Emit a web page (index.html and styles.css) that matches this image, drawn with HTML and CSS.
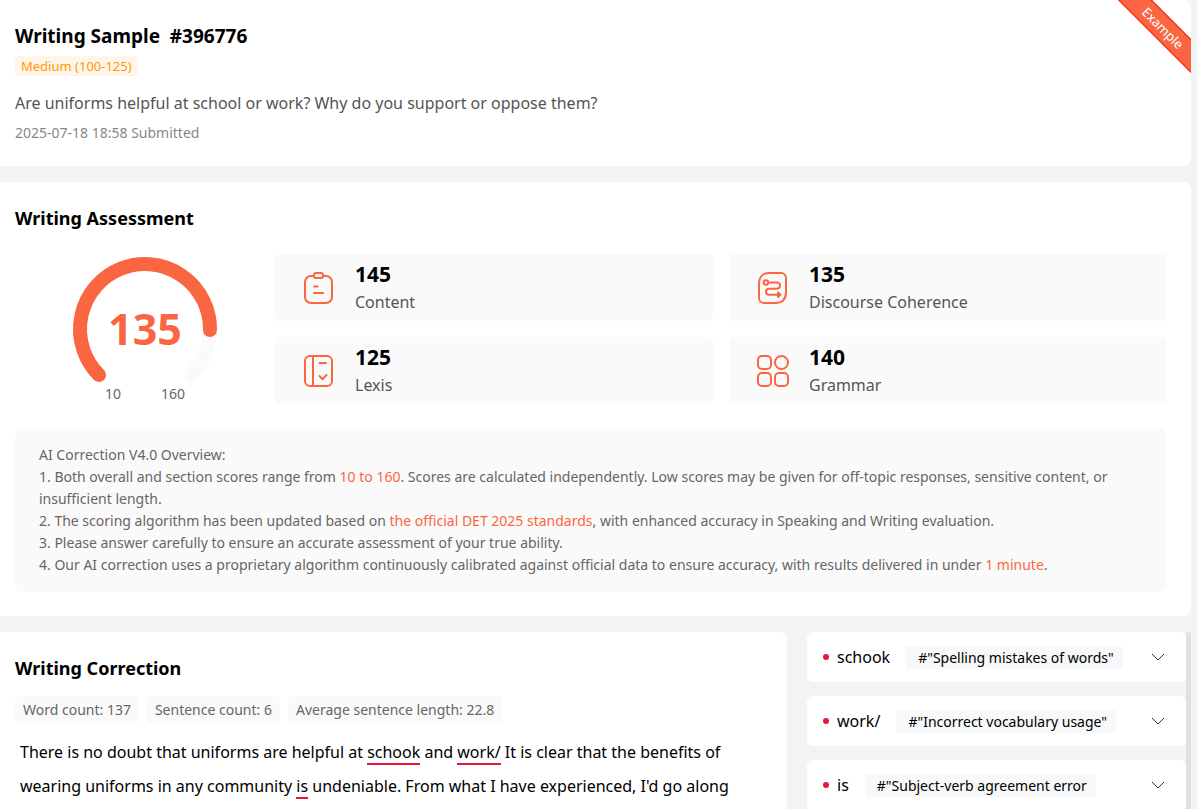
FILE: index.html
```html
<!DOCTYPE html>
<html lang="en">
<head>
    <meta charset="UTF-8">
    <meta name="viewport" content="width=device-width, initial-scale=1.0">
    <title>Writing Sample #396776</title>
    <link rel="stylesheet" href="styles.css">
</head>
<body>

    <header class="card sample">
        <h1>Writing Sample&nbsp; #396776</h1>
        <span class="level">Medium (100-125)</span>
        <p class="question">Are uniforms helpful at school or work? Why do you support or oppose them?</p>
        <p class="submitted">2025-07-18 18:58 Submitted</p>
        <div class="ribbon">Example</div>
    </header>

    <section class="card assessment">
        <h2>Writing Assessment</h2>
        <div class="results">
            <div class="gauge">
                <svg viewBox="0 0 150 150" width="150" height="150" fill="none" stroke-width="14" stroke-linecap="round">
                    <path d="M29 121A65 65 0 1 1 121 121" stroke="#fafafa"/>
                    <path d="M29 121A65 65 0 1 1 140 76" stroke="#fa6641"/>
                </svg>
                <strong class="total">135</strong>
                <div class="range"><span>10</span><span>160</span></div>
            </div>
            <div class="scores">
                <div class="score">
                    <svg class="icon" viewBox="0 0 32 32">
                        <path d="M11 4H8a6 6 0 0 0-6 6v15a6 6 0 0 0 6 6h15a6 6 0 0 0 6-6V10a6 6 0 0 0-6-6h-3"/>
                        <rect x="11" y="1" width="9" height="5" rx="2"/>
                        <path d="M11 14.500h3.500M11 21h9"/>
                    </svg>
                    <div>
                        <strong>145</strong>
                        <span>Content</span>
                    </div>
                </div>
                <div class="score">
                    <svg class="icon" viewBox="0 0 32 32">
                        <path d="M12 1h12a5 5 0 0 1 5 5v14c0 7-4 11-11 11H7a5 5 0 0 1-5-5V12C2 5 6 1 12 1z"/>
                        <circle cx="9" cy="10.500" r="2.200"/>
                        <path d="M11.500 10.500h8.500a3 3 0 0 1 0 6.200h-8a3 3 0 0 0 0 6h11M21 20.500l2.500 2.200-2.500 2.200z"/>
                    </svg>
                    <div>
                        <strong>135</strong>
                        <span>Discourse Coherence</span>
                    </div>
                </div>
                <div class="score">
                    <svg class="icon" viewBox="0 0 32 32">
                        <rect x="2" y="1" width="27" height="30" rx="5"/>
                        <path d="M10 1v30M16.500 8h6.500M16.500 21l3.200 3.200 3.800-4.200"/>
                    </svg>
                    <div>
                        <strong>125</strong>
                        <span>Lexis</span>
                    </div>
                </div>
                <div class="score">
                    <svg class="icon" viewBox="0 0 32 32">
                        <rect x="1" y="1" width="13" height="13" rx="4"/>
                        <circle cx="24.500" cy="7.500" r="6.500"/>
                        <rect x="1" y="18" width="13" height="13" rx="4"/>
                        <rect x="18" y="18" width="13" height="13" rx="4"/>
                    </svg>
                    <div>
                        <strong>140</strong>
                        <span>Grammar</span>
                    </div>
                </div>
            </div>
        </div>
        <div class="overview">
            <p>AI Correction V4.0 Overview:</p>
            <p>1. Both overall and section scores range from <em>10 to 160</em>. Scores are calculated independently. Low scores may be given for off-topic responses, sensitive content, or insufficient length.</p>
            <p>2. The scoring algorithm has been updated based on <em>the official DET 2025 standards</em>, with enhanced accuracy in Speaking and Writing evaluation.</p>
            <p>3. Please answer carefully to ensure an accurate assessment of your true ability.</p>
            <p>4. Our AI correction uses a proprietary algorithm continuously calibrated against official data to ensure accuracy, with results delivered in under <em>1 minute</em>.</p>
        </div>
    </section>

    <div class="columns">
        <section class="card correction">
            <h2>Writing Correction</h2>
            <div class="stats">
                <span>Word count: 137</span>
                <span>Sentence count: 6</span>
                <span>Average sentence length: 22.8</span>
            </div>
            <p class="essay">There is no doubt that uniforms are helpful at <u>schook</u> and <u>work/</u> It is clear that the benefits of wearing uniforms in any community <u>is</u> undeniable. From what I have experienced, I'd go along</p>
        </section>

        <aside class="errors">
            <div class="error-list">
                <button class="error">
                    <span class="word">schook</span>
                    <span class="tag">#"Spelling mistakes of words"</span>
                    <svg class="chevron" viewBox="0 0 14 14"><path d="M1 4l6 6 6-6"/></svg>
                </button>
                <button class="error">
                    <span class="word">work/</span>
                    <span class="tag">#"Incorrect vocabulary usage"</span>
                    <svg class="chevron" viewBox="0 0 14 14"><path d="M1 4l6 6 6-6"/></svg>
                </button>
                <button class="error">
                    <span class="word">is</span>
                    <span class="tag">#"Subject-verb agreement error</span>
                    <svg class="chevron" viewBox="0 0 14 14"><path d="M1 4l6 6 6-6"/></svg>
                </button>
            </div>
            <div class="scrollbar"></div>
        </aside>
    </div>

</body>
</html>
```
FILE: styles.css
```css
* {
    box-sizing: border-box;
}

body {
    display: flex;
    flex-direction: column;
    gap: 16px;
    height: 100vh;
    margin: 0;
    padding-right: 6px;
    overflow: hidden;
    background-color: #f2f3f5;
    font-family: 'Noto Sans', 'Open Sans', sans-serif;
    font-size: 16px;
    color: #000;
}

h1, h2, p {
    margin: 0;
}

h1, h2 {
    font-size: 18px;
    line-height: 28px;
}

h1 {
    font-size: 19px;
}

.card {
    flex-shrink: 0;
    padding: 22px 24px 24px 15px;
    background-color: #fff;
    border-radius: 0 8px 8px 0;
}

/* Sample header */
.sample {
    position: relative;
    padding-bottom: 23px;
    overflow: hidden;
}

.level {
    display: block;
    width: fit-content;
    margin: 6px 0 15px;
    padding: 0 6px;
    border-radius: 4px;
    background-color: #fff5eb;
    color: #ff9900;
    font-size: 13px;
    line-height: 20px;
}

.question {
    color: #555;
    line-height: 24px;
}

.submitted {
    margin-top: 8px;
    color: #888;
    font-size: 14px;
    line-height: 20px;
}

.ribbon {
    position: absolute;
    top: 16px;
    right: -42px;
    width: 140px;
    border: 1px solid #ff1a1a;
    background-color: #fa6641;
    color: #fff;
    font-size: 13px;
    line-height: 22px;
    text-align: center;
    transform: rotate(45deg);
}

/* Assessment */
.results {
    display: flex;
    margin-top: 22px;
}

.gauge {
    position: relative;
    width: 260px;
    height: 150px;
    text-align: center;
    color: #fa6641;
}

.total {
    position: absolute;
    inset: 50px 0 auto;
    font-size: 43px;
    line-height: 50px;
}

.range {
    position: absolute;
    inset: 130px 0 auto;
    display: flex;
    justify-content: center;
    gap: 40px;
    color: #666;
    font-size: 14px;
    line-height: 20px;
}

.scores {
    flex: 1;
    display: grid;
    grid-template-columns: 1fr 1fr;
    gap: 16px;
}

.score {
    display: flex;
    align-items: center;
    gap: 20px;
    padding: 0 28px;
    border-radius: 4px;
    background-color: #fafafa;
}

.icon {
    width: 32px;
    height: 32px;
    overflow: visible;
    fill: none;
    stroke: #fa6641;
    stroke-width: 2;
    stroke-linecap: round;
    stroke-linejoin: round;
}

.score strong,
.score span {
    display: block;
    line-height: 28px;
}

.score strong {
    font-size: 21px;
}

.score span {
    color: #555;
}

.overview {
    margin-top: 24px;
    padding: 16px 24px;
    border-radius: 8px;
    background-color: #fafafa;
    color: #666;
    font-size: 14px;
    line-height: 22px;
}

.overview em {
    color: #fa6641;
    font-style: normal;
}

/* Correction */
.columns {
    flex: 1;
    display: grid;
    grid-template-columns: 1fr 384px;
    gap: 20px;
}

.correction {
    border-radius: 0 8px 0 0;
}

.stats {
    display: flex;
    gap: 8px;
    margin: 14px 0 12px;
}

.stats span {
    padding: 0 8px;
    border-radius: 4px;
    background-color: #fafafa;
    color: #666;
    font-size: 14px;
    line-height: 27px;
}

.essay {
    padding-left: 5px;
    line-height: 34px;
}

.essay u {
    border-bottom: 2px solid #e61639;
    text-decoration: none;
}

.errors {
    display: flex;
}

.error-list {
    flex: 1;
    display: flex;
    flex-direction: column;
    gap: 14px;
}

.error {
    display: flex;
    flex-shrink: 0;
    align-items: center;
    height: 50px;
    padding: 0 21px 0 16px;
    border: none;
    border-radius: 6px;
    background-color: #fff;
    color: #000;
    font-family: inherit;
    font-size: 16px;
    cursor: pointer;
}

.error::before {
    content: '';
    width: 6px;
    height: 6px;
    margin-right: 8px;
    border-radius: 50%;
    background-color: #e61639;
}

.tag {
    margin-left: 16px;
    padding: 0 9px 0 12px;
    border-radius: 2px;
    background-color: #f7f8fa;
    font-size: 14px;
    line-height: 23px;
}

.chevron {
    width: 14px;
    height: 14px;
    margin-left: auto;
    fill: none;
    stroke: #333;
}

.scrollbar {
    width: 5px;
    border-radius: 5px 5px 0 0;
    background-color: #e0e0e0;
}
```
